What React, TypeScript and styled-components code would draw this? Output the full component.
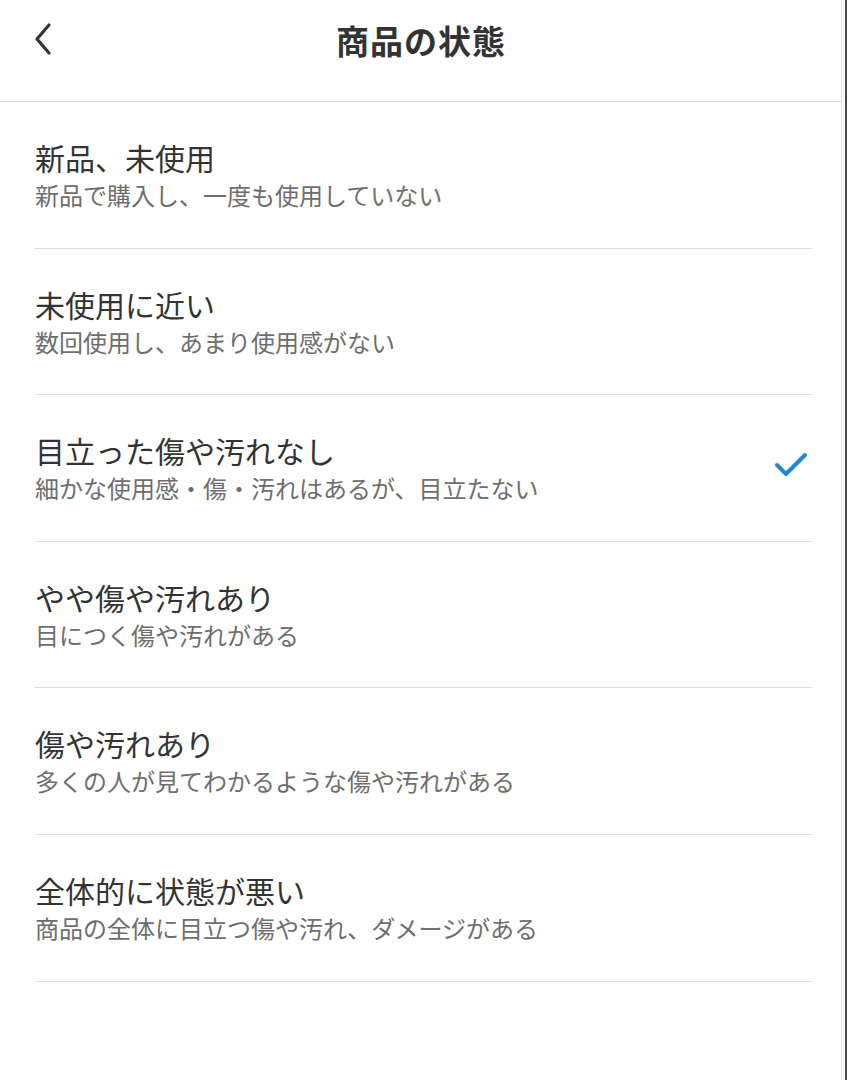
import React, { FC } from "react";
import styled, { createGlobalStyle } from "styled-components";

interface Condition {
  title: string;
  description: string;
}

const conditions: Condition[] = [
  { title: "新品、未使用", description: "新品で購入し、一度も使用していない" },
  { title: "未使用に近い", description: "数回使用し、あまり使用感がない" },
  {
    title: "目立った傷や汚れなし",
    description: "細かな使用感・傷・汚れはあるが、目立たない"
  },
  { title: "やや傷や汚れあり", description: "目につく傷や汚れがある" },
  { title: "傷や汚れあり", description: "多くの人が見てわかるような傷や汚れがある" },
  {
    title: "全体的に状態が悪い",
    description: "商品の全体に目立つ傷や汚れ、ダメージがある"
  }
];

const GlobalStyle = createGlobalStyle`
  html, body {
    margin: 0;
    padding: 0;
    background: #fff;
  }

  body {
    font-family: "Noto Sans CJK JP", "Noto Sans", sans-serif;
    -webkit-font-smoothing: antialiased;
  }
`;

const Screen = styled.div`
  width: 847px;
  height: 1080px;
  box-sizing: border-box;
  background: #fff;
  box-shadow: inset -2px 0 0 #4a4a4a, inset -5px 0 0 #fff, inset -6px 0 0 #e2e2e2;
  overflow: hidden;
`;

const Header = styled.header`
  position: relative;
  height: 101px;
  margin-right: 5px;
  border-bottom: 1px solid #dcdcdc;
  display: flex;
  align-items: flex-start;
  justify-content: center;
`;

const BackButton = styled.button`
  position: absolute;
  left: 26px;
  top: 18px;
  width: 34px;
  height: 42px;
  padding: 0;
  border: none;
  background: transparent;
  display: flex;
  align-items: center;
  justify-content: center;
  cursor: pointer;
`;

const Title = styled.h1`
  margin: 0;
  padding-top: 17px;
  font-size: 33px;
  line-height: 46px;
  font-weight: 700;
  color: #333;
  letter-spacing: 1px;
`;

const List = styled.ul`
  list-style: none;
  margin: 0 35px;
  padding: 0;
`;

const Row = styled.li`
  height: 146.6px;
  box-sizing: border-box;
  padding-top: 37px;
  border-bottom: 1px solid #dedede;
  display: flex;
  align-items: flex-start;
  justify-content: space-between;
  cursor: pointer;
`;

const RowText = styled.div`
  display: flex;
  flex-direction: column;
  gap: 4px;
`;

const RowTitle = styled.div`
  font-size: 30px;
  line-height: 36px;
  color: #333;
`;

const RowDescription = styled.div`
  font-size: 24px;
  line-height: 32px;
  color: #6e6e6e;
`;

const CheckMark = styled.svg`
  margin-top: 18px;
  margin-right: 3px;
  flex-shrink: 0;
`;

const ChevronLeft: FC = () => (
  <svg width="22" height="36" viewBox="0 0 22 36" fill="none">
    <path
      d="M17 4 L5 18 L17 32"
      stroke="#333"
      strokeWidth="3.2"
      strokeLinecap="round"
      strokeLinejoin="round"
    />
  </svg>
);

export default function App() {
  const selected = 2;

  return (
    <>
      <GlobalStyle />
      <Screen>
        <Header>
          <BackButton aria-label="戻る">
            <ChevronLeft />
          </BackButton>
          <Title>商品の状態</Title>
        </Header>
        <List>
          {conditions.map((c, i) => (
            <Row key={c.title}>
              <RowText>
                <RowTitle>{c.title}</RowTitle>
                <RowDescription>{c.description}</RowDescription>
              </RowText>
              {i === selected && (
                <CheckMark width="36" height="30" viewBox="0 0 36 30" fill="none">
                  <path
                    d="M4 15 L13 24 L32 5"
                    stroke="#1e88d6"
                    strokeWidth="4"
                    strokeLinecap="round"
                    strokeLinejoin="round"
                  />
                </CheckMark>
              )}
            </Row>
          ))}
        </List>
      </Screen>
    </>
  );
}
